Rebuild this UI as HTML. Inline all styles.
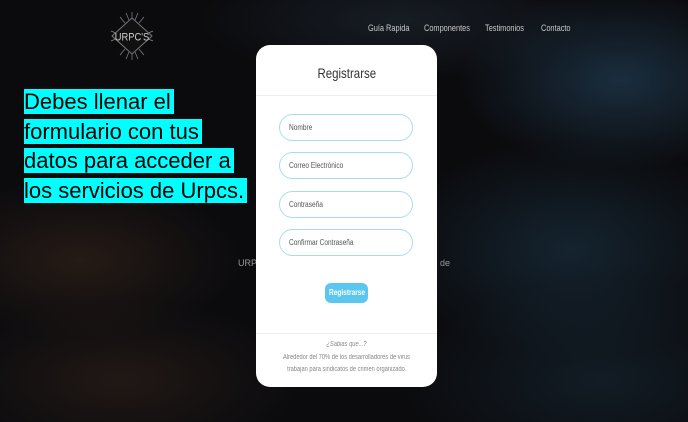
<!DOCTYPE html>
<html><head><meta charset="utf-8"><style>
*{margin:0;padding:0;box-sizing:border-box}
body{width:688px;height:422px;overflow:hidden;position:relative;font-family:"Liberation Sans",sans-serif;
background:
radial-gradient(ellipse 160px 90px at 620px 80px,rgba(40,80,110,.5),transparent),
radial-gradient(ellipse 180px 110px at 570px 250px,rgba(30,60,80,.5),transparent),
radial-gradient(ellipse 160px 80px at 80px 260px,rgba(70,45,30,.45),transparent),
radial-gradient(ellipse 200px 60px at 400px 20px,rgba(40,55,70,.4),transparent),
radial-gradient(ellipse 180px 80px at 120px 380px,rgba(60,40,30,.45),transparent),
radial-gradient(ellipse 200px 100px at 600px 380px,rgba(25,45,60,.5),transparent),
#0b0b0e;}
.c{display:inline-block;transform:scaleX(.82);transform-origin:left center;white-space:nowrap}
.nav{position:absolute;top:23px;font-size:9px;color:#c8c8c8}
.hl{position:absolute;left:24px;top:87px;font-size:22px;line-height:29.5px;color:#000}
.hl span{background:#00ffff;padding-right:3px}
.card{position:absolute;left:256px;top:45px;width:181px;height:342px;background:#fff;border-radius:14px}
.t{position:absolute;top:20px;width:100%;text-align:center;font-size:14px;color:#333}
.t .c{transform-origin:center}
.sep{position:absolute;left:0;width:100%;height:1px;background:#eee}
.in{position:absolute;left:23px;width:134px;height:27px;border:1px solid #a8dcf3;border-radius:14px;font-size:8px;color:#555;padding:8px 0 0 9px}
.btn{position:absolute;left:69px;top:238px;width:43px;height:20px;background:#5bc6f0;border-radius:6px;color:#fff;font-size:8px;font-weight:bold;text-align:center;line-height:20px}
.btn .c,.f .c{transform-origin:center}
.f{position:absolute;width:100%;text-align:center;color:#888;font-size:7px}
</style></head><body>
<svg style="position:absolute;left:106px;top:10px" width="52" height="52" viewBox="0 0 52 52">
<g stroke="#888" stroke-width=".7" fill="none">
<path d="M26 2v7M20 3l3 7M32 3l-3 7M14 7l5 6M38 7l-5 6M5 21l7 3M47 21l-7 3M5 31l7-3M47 31l-7-3M14 45l5-6M38 45l-5-6M20 49l3-7M32 49l-3-7M26 50v-7"/></g>
<polygon points="26,8 46,26 26,44 6,26" fill="#111" stroke="#777" stroke-width="1"/>
<text x="26" y="30.5" font-size="11" fill="#ccc" text-anchor="middle" font-family="Liberation Sans" transform="translate(26 0) scale(.85 1) translate(-26 0)">URPC'S</text>
</svg>
<div class="nav" style="left:368px"><span class="c">Guía Rapida</span></div>
<div class="nav" style="left:424px"><span class="c">Componentes</span></div>
<div class="nav" style="left:485px"><span class="c">Testimonios</span></div>
<div class="nav" style="left:541px"><span class="c">Contacto</span></div>
<div style="position:absolute;left:238px;top:258px;font-size:9px;color:#999">URPI</div>
<div style="position:absolute;left:440px;top:258px;font-size:9px;color:#999">de</div>
<div class="hl"><span>Debes llenar el</span><br><span>formulario con tus</span><br><span>datos para acceder a</span><br><span>los servicios de Urpcs.</span></div>
<div class="card">
<div class="t"><span class="c">Registrarse</span></div>
<div class="sep" style="top:50px"></div>
<div class="in" style="top:69px"><span class="c">Nombre</span></div>
<div class="in" style="top:107px"><span class="c">Correo Electrónico</span></div>
<div class="in" style="top:146px"><span class="c">Contraseña</span></div>
<div class="in" style="top:184px"><span class="c">Confirmar Contraseña</span></div>
<div class="btn"><span class="c">Registrarse</span></div>
<div class="sep" style="top:288px"></div>
<div class="f" style="top:296px;font-style:italic"><span class="c">¿Sabias que...?</span></div>
<div class="f" style="top:309px"><span class="c">Alrededor del 70% de los desarrolladores de virus</span></div>
<div class="f" style="top:321px"><span class="c">trabajan para sindicatos de crimen organizado.</span></div>
</div>
</body></html>
